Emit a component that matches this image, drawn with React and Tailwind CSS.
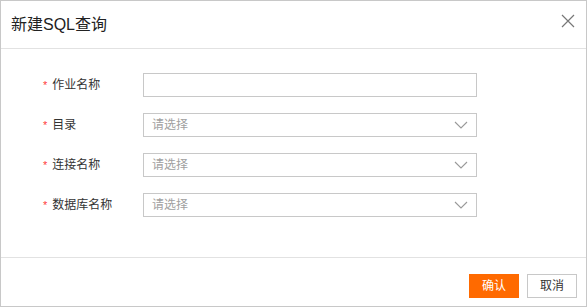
import React from 'react';

const fontStack = { fontFamily: '"Liberation Sans", "Noto Sans CJK SC", sans-serif' };

function Chevron() {
  return (
    <svg width="14" height="8" viewBox="0 0 14 8" className="text-[#999]">
      <path d="M1 1 L7 7 L13 1" fill="none" stroke="currentColor" strokeWidth="1.1" />
    </svg>
  );
}

function FormRow({ label, select }) {
  return (
    <div className="flex items-center h-[24px]">
      <div className="w-[142px] shrink-0 pl-[42px] flex items-center text-[12px] text-[#333] whitespace-nowrap">
        <span className="text-[#ff3b3b] mr-[5px] text-[11px]">*</span>
        <span>{label}</span>
      </div>
      <div className="w-[334px] shrink-0 h-[24px] border border-[#c8c8c8] flex items-center justify-between pl-[8px] pr-[8px] text-[12px]">
        {select ? <span className="text-[#a0a0a0]">请选择</span> : <span />}
        {select && <Chevron />}
      </div>
    </div>
  );
}

export default function App() {
  return (
    <div className="w-[588px] h-[308px] bg-white" style={fontStack}>
      <div className="w-[587px] h-[307px] border border-[#c8c8c8] flex flex-col">
        <div className="h-[48px] border-b border-[#e2e2e2] flex items-center justify-between pl-[10px] pr-[10px]">
          <span className="text-[16px] text-[#222]">新建SQL查询</span>
          <svg width="14" height="14" viewBox="0 0 14 14" className="mr-[1px] mb-[7px]">
            <path d="M1 1 L13 13 M13 1 L1 13" stroke="#777" strokeWidth="1.2" />
          </svg>
        </div>
        <div className="flex-1 flex flex-col gap-[16px] pt-[24px]">
          <FormRow label="作业名称" />
          <FormRow label="目录" select />
          <FormRow label="连接名称" select />
          <FormRow label="数据库名称" select />
        </div>
        <div className="h-[49px] border-t border-[#e2e2e2] flex justify-end items-start gap-[8px] pt-[16px] pr-[9px]">
          <button className="w-[50px] h-[24px] bg-[#ff6a00] text-white text-[12px]">确认</button>
          <button className="w-[50px] h-[24px] border border-[#c8c8c8] bg-white text-[#333] text-[12px]">取消</button>
        </div>
      </div>
    </div>
  );
}
